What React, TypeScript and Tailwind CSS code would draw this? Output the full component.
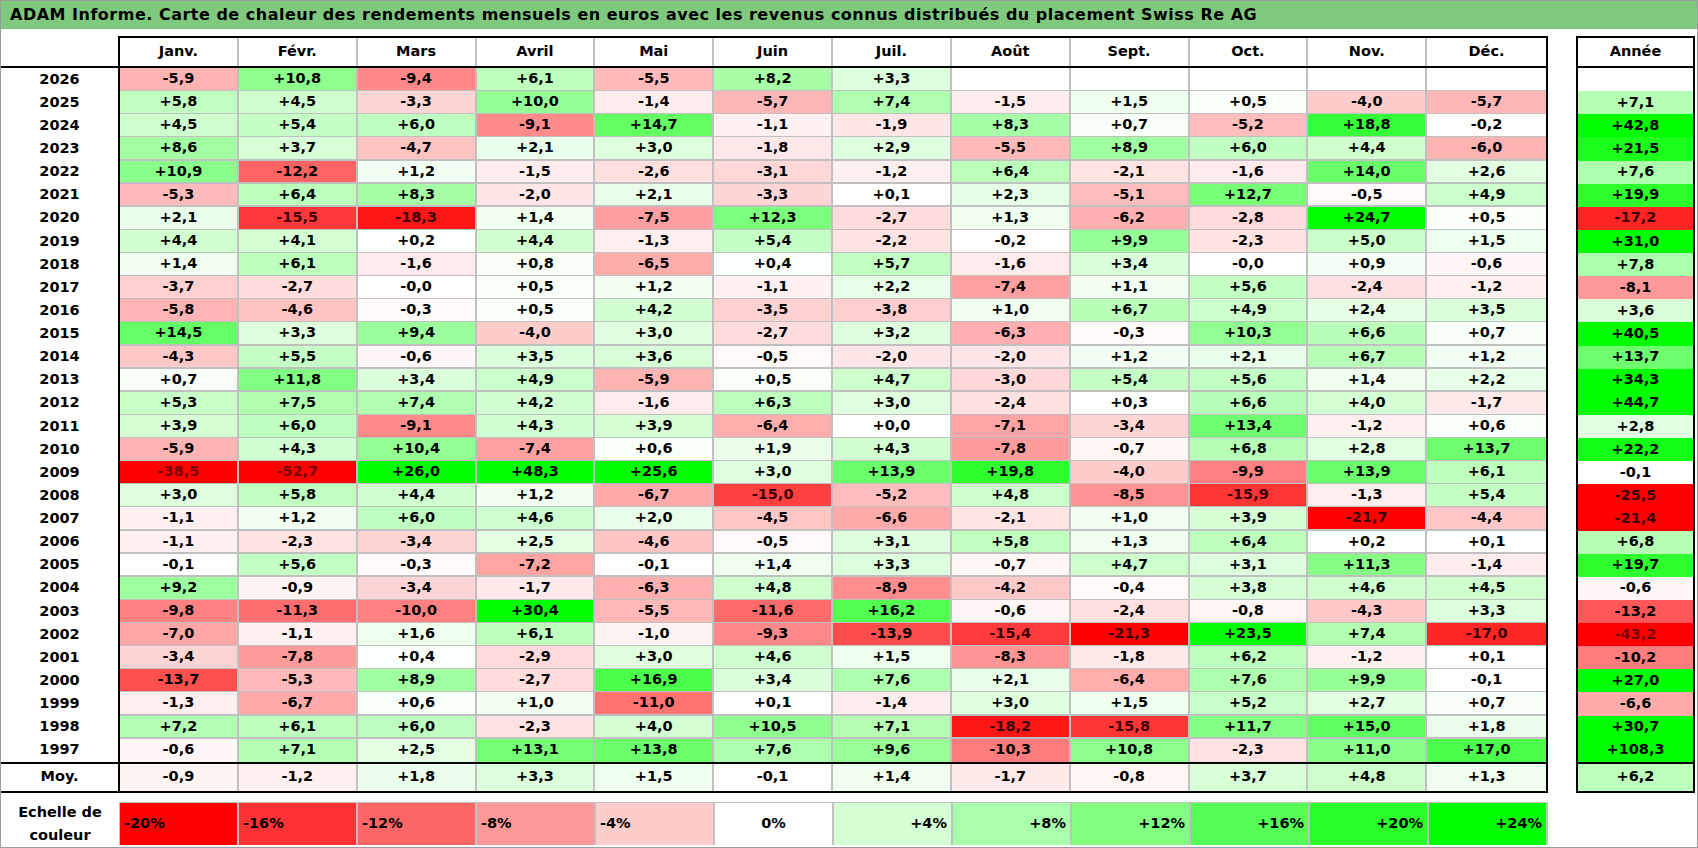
import React from 'react';

const months = ['Janv.', 'Févr.', 'Mars', 'Avril', 'Mai', 'Juin', 'Juil.', 'Août', 'Sept.', 'Oct.', 'Nov.', 'Déc.'];

// year, 12 months, year total ('' = no data yet)
const rows: [string, string[], string][] = [
  ['2026', ['-5,9', '+10,8', '-9,4', '+6,1', '-5,5', '+8,2', '+3,3', '', '', '', '', ''], ''],
  ['2025', ['+5,8', '+4,5', '-3,3', '+10,0', '-1,4', '-5,7', '+7,4', '-1,5', '+1,5', '+0,5', '-4,0', '-5,7'], '+7,1'],
  ['2024', ['+4,5', '+5,4', '+6,0', '-9,1', '+14,7', '-1,1', '-1,9', '+8,3', '+0,7', '-5,2', '+18,8', '-0,2'], '+42,8'],
  ['2023', ['+8,6', '+3,7', '-4,7', '+2,1', '+3,0', '-1,8', '+2,9', '-5,5', '+8,9', '+6,0', '+4,4', '-6,0'], '+21,5'],
  ['2022', ['+10,9', '-12,2', '+1,2', '-1,5', '-2,6', '-3,1', '-1,2', '+6,4', '-2,1', '-1,6', '+14,0', '+2,6'], '+7,6'],
  ['2021', ['-5,3', '+6,4', '+8,3', '-2,0', '+2,1', '-3,3', '+0,1', '+2,3', '-5,1', '+12,7', '-0,5', '+4,9'], '+19,9'],
  ['2020', ['+2,1', '-15,5', '-18,3', '+1,4', '-7,5', '+12,3', '-2,7', '+1,3', '-6,2', '-2,8', '+24,7', '+0,5'], '-17,2'],
  ['2019', ['+4,4', '+4,1', '+0,2', '+4,4', '-1,3', '+5,4', '-2,2', '-0,2', '+9,9', '-2,3', '+5,0', '+1,5'], '+31,0'],
  ['2018', ['+1,4', '+6,1', '-1,6', '+0,8', '-6,5', '+0,4', '+5,7', '-1,6', '+3,4', '-0,0', '+0,9', '-0,6'], '+7,8'],
  ['2017', ['-3,7', '-2,7', '-0,0', '+0,5', '+1,2', '-1,1', '+2,2', '-7,4', '+1,1', '+5,6', '-2,4', '-1,2'], '-8,1'],
  ['2016', ['-5,8', '-4,6', '-0,3', '+0,5', '+4,2', '-3,5', '-3,8', '+1,0', '+6,7', '+4,9', '+2,4', '+3,5'], '+3,6'],
  ['2015', ['+14,5', '+3,3', '+9,4', '-4,0', '+3,0', '-2,7', '+3,2', '-6,3', '-0,3', '+10,3', '+6,6', '+0,7'], '+40,5'],
  ['2014', ['-4,3', '+5,5', '-0,6', '+3,5', '+3,6', '-0,5', '-2,0', '-2,0', '+1,2', '+2,1', '+6,7', '+1,2'], '+13,7'],
  ['2013', ['+0,7', '+11,8', '+3,4', '+4,9', '-5,9', '+0,5', '+4,7', '-3,0', '+5,4', '+5,6', '+1,4', '+2,2'], '+34,3'],
  ['2012', ['+5,3', '+7,5', '+7,4', '+4,2', '-1,6', '+6,3', '+3,0', '-2,4', '+0,3', '+6,6', '+4,0', '-1,7'], '+44,7'],
  ['2011', ['+3,9', '+6,0', '-9,1', '+4,3', '+3,9', '-6,4', '+0,0', '-7,1', '-3,4', '+13,4', '-1,2', '+0,6'], '+2,8'],
  ['2010', ['-5,9', '+4,3', '+10,4', '-7,4', '+0,6', '+1,9', '+4,3', '-7,8', '-0,7', '+6,8', '+2,8', '+13,7'], '+22,2'],
  ['2009', ['-38,5', '-52,7', '+26,0', '+48,3', '+25,6', '+3,0', '+13,9', '+19,8', '-4,0', '-9,9', '+13,9', '+6,1'], '-0,1'],
  ['2008', ['+3,0', '+5,8', '+4,4', '+1,2', '-6,7', '-15,0', '-5,2', '+4,8', '-8,5', '-15,9', '-1,3', '+5,4'], '-25,5'],
  ['2007', ['-1,1', '+1,2', '+6,0', '+4,6', '+2,0', '-4,5', '-6,6', '-2,1', '+1,0', '+3,9', '-21,7', '-4,4'], '-21,4'],
  ['2006', ['-1,1', '-2,3', '-3,4', '+2,5', '-4,6', '-0,5', '+3,1', '+5,8', '+1,3', '+6,4', '+0,2', '+0,1'], '+6,8'],
  ['2005', ['-0,1', '+5,6', '-0,3', '-7,2', '-0,1', '+1,4', '+3,3', '-0,7', '+4,7', '+3,1', '+11,3', '-1,4'], '+19,7'],
  ['2004', ['+9,2', '-0,9', '-3,4', '-1,7', '-6,3', '+4,8', '-8,9', '-4,2', '-0,4', '+3,8', '+4,6', '+4,5'], '-0,6'],
  ['2003', ['-9,8', '-11,3', '-10,0', '+30,4', '-5,5', '-11,6', '+16,2', '-0,6', '-2,4', '-0,8', '-4,3', '+3,3'], '-13,2'],
  ['2002', ['-7,0', '-1,1', '+1,6', '+6,1', '-1,0', '-9,3', '-13,9', '-15,4', '-21,3', '+23,5', '+7,4', '-17,0'], '-43,2'],
  ['2001', ['-3,4', '-7,8', '+0,4', '-2,9', '+3,0', '+4,6', '+1,5', '-8,3', '-1,8', '+6,2', '-1,2', '+0,1'], '-10,2'],
  ['2000', ['-13,7', '-5,3', '+8,9', '-2,7', '+16,9', '+3,4', '+7,6', '+2,1', '-6,4', '+7,6', '+9,9', '-0,1'], '+27,0'],
  ['1999', ['-1,3', '-6,7', '+0,6', '+1,0', '-11,0', '+0,1', '-1,4', '+3,0', '+1,5', '+5,2', '+2,7', '+0,7'], '-6,6'],
  ['1998', ['+7,2', '+6,1', '+6,0', '-2,3', '+4,0', '+10,5', '+7,1', '-18,2', '-15,8', '+11,7', '+15,0', '+1,8'], '+30,7'],
  ['1997', ['-0,6', '+7,1', '+2,5', '+13,1', '+13,8', '+7,6', '+9,6', '-10,3', '+10,8', '-2,3', '+11,0', '+17,0'], '+108,3'],
];

const average = ['-0,9', '-1,2', '+1,8', '+3,3', '+1,5', '-0,1', '+1,4', '-1,7', '-0,8', '+3,7', '+4,8', '+1,3'];
const averageYear = '+6,2';

const scale = ['-20%', '-16%', '-12%', '-8%', '-4%', '0%', '+4%', '+8%', '+12%', '+16%', '+20%', '+24%'];

const toNum = (s: string) => parseFloat(s.replace(',', '.').replace('%', ''));

// red at -20 %, white at 0, green at +24 %
function heat(s: string): string {
  if (!s) return '#ffffff';
  const v = toNum(s);
  if (v < 0) {
    const c = Math.round(255 * (1 - Math.min(1, -v / 20)));
    return `rgb(255,${c},${c})`;
  }
  const c = Math.round(255 * (1 - Math.min(1, v / 24)));
  return `rgb(${c},255,${c})`;
}

function ink(s: string): string {
  if (!s) return '#000000';
  const v = toNum(s);
  if (v <= -30) return '#7a0000';
  if (v <= -15) return '#3d0000';
  return '#000000';
}

const ROW_H = 'h-[23.13px]';

const App: React.FC = () => {
  return (
    <div className="w-[1698px] h-[848px] bg-white border border-[#9c9c9c] font-['DejaVu_Sans',sans-serif] font-bold text-black overflow-hidden">
      {/* TITLE */}
      <div className="h-[28px] bg-[#7fc97f] flex items-center pl-[9px] text-[16px] tracking-[0.5px] whitespace-nowrap">
        ADAM Informe. Carte de chaleur des rendements mensuels en euros avec les revenus connus distribués du placement Swiss Re AG
      </div>

      <div className="mt-[7px] flex text-[14.5px]">
        {/* MAIN TABLE */}
        <div className="w-[1547px]">
          <div className="flex h-[30px]">
            <div className="w-[117px]" />
            <div className="flex-1 grid grid-cols-12 border-2 border-b-0 border-black">
              {months.map((m, i) => (
                <div key={m} className={`flex items-center justify-center ${i < 11 ? 'border-r-2 border-[#c0c0c0]' : ''}`}>
                  {m}
                </div>
              ))}
            </div>
          </div>

          <div className="border-y-2 border-black">
            {rows.map(([year, vals], r) => {
              const last = r === rows.length - 1;
              return (
                <div key={year} className={`flex ${ROW_H}`}>
                  <div className="w-[117px] flex items-center justify-center">{year}</div>
                  <div className="flex-1 grid grid-cols-12 border-x-2 border-black">
                    {vals.map((v, i) => (
                      <div
                        key={i}
                        className={`flex items-center justify-center ${i < 11 ? 'border-r-2' : ''} ${last ? '' : 'border-b-2'} border-[#c0c0c0]`}
                        style={{ backgroundColor: heat(v), color: ink(v) }}
                      >
                        {v}
                      </div>
                    ))}
                  </div>
                </div>
              );
            })}
          </div>

          <div className="flex h-[29px] border-b-2 border-black">
            <div className="w-[117px] flex items-center justify-center">Moy.</div>
            <div className="flex-1 grid grid-cols-12 border-x-2 border-black">
              {average.map((v, i) => (
                <div
                  key={i}
                  className={`flex items-center justify-center ${i < 11 ? 'border-r-2 border-[#c0c0c0]' : ''}`}
                  style={{ backgroundColor: heat(v) }}
                >
                  {v}
                </div>
              ))}
            </div>
          </div>
        </div>

        {/* YEAR COLUMN */}
        <div className="ml-[28px] w-[119px]">
          <div className="h-[30px] border-2 border-b-0 border-black flex items-center justify-center">Année</div>
          <div className="border-2 border-black">
            {rows.map(([year, , total]) => (
              <div
                key={year}
                className={`${ROW_H} flex items-center justify-center`}
                style={{ backgroundColor: heat(total), color: ink(total) }}
              >
                {total}
              </div>
            ))}
          </div>
          <div
            className="h-[29px] border-2 border-t-0 border-black flex items-center justify-center"
            style={{ backgroundColor: heat(averageYear) }}
          >
            {averageYear}
          </div>
        </div>
      </div>

      {/* COLOUR SCALE */}
      <div className="mt-[9px] flex h-[43px] text-[14.5px]">
        <div className="w-[118px] flex flex-col items-center justify-center leading-[23px] pt-[2px]">
          <span>Echelle de</span>
          <span>couleur</span>
        </div>
        <div className="w-[1429px] grid grid-cols-12 border-t border-l border-[#c0c0c0]">
          {scale.map((s) => {
            const v = toNum(s);
            const align = v < 0 ? 'justify-start pl-[4px]' : v > 0 ? 'justify-end pr-[4px]' : 'justify-center';
            return (
              <div
                key={s}
                className={`flex items-center ${align} border-r-2 border-[#c0c0c0]`}
                style={{ backgroundColor: heat(s) }}
              >
                {s}
              </div>
            );
          })}
        </div>
      </div>
    </div>
  );
};

export default App;
